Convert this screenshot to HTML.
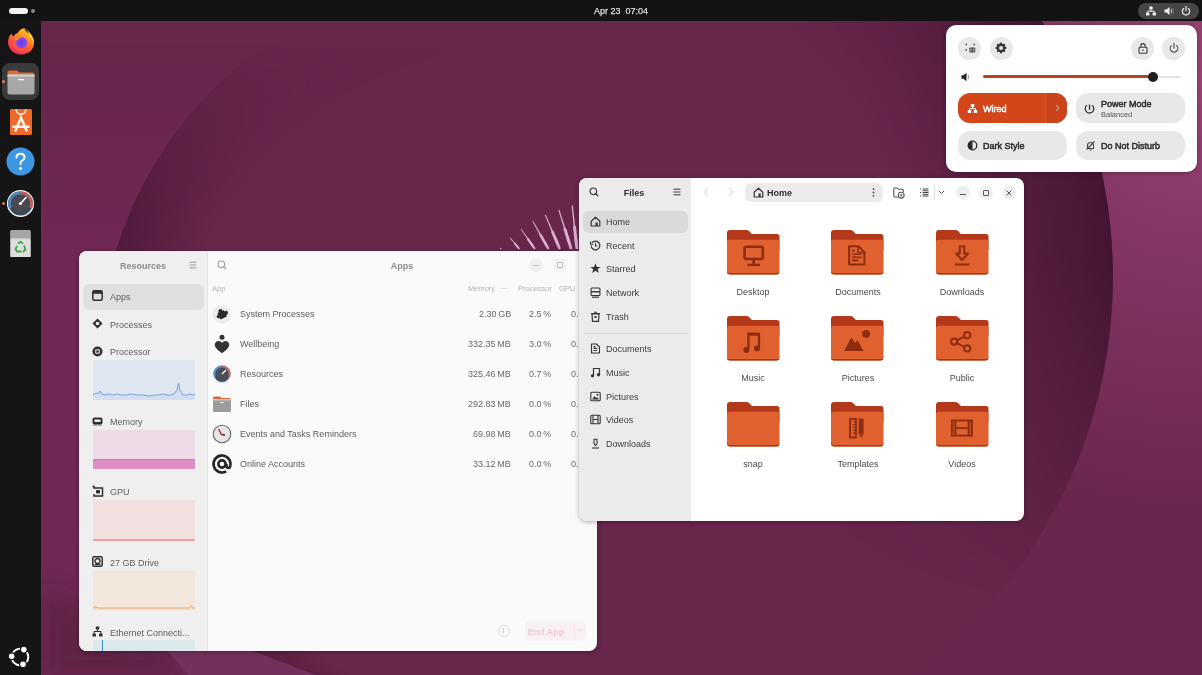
<!DOCTYPE html>
<html><head><meta charset="utf-8">
<style>
*{margin:0;padding:0;box-sizing:border-box}
html,body{width:1202px;height:675px;overflow:hidden;background:#68264b;font-family:"Liberation Sans",sans-serif}
.abs{position:absolute}
#wall{position:absolute;left:0;top:0;width:1202px;height:675px}
#topbar{position:absolute;left:0;top:0;width:1202px;height:21px;background:#131313}
#dock{position:absolute;left:0;top:21px;width:41px;height:654px;background:#151515}
.win{position:absolute;border-radius:8px;overflow:hidden;box-shadow:0 1px 5px rgba(0,0,0,.3)}
.t{position:absolute;white-space:nowrap;line-height:12px;font-size:9px;will-change:transform}
.r{text-align:right}
.c{text-align:center}
svg.abs{overflow:visible}
</style></head>
<body>
<div id="root" style="position:absolute;left:0;top:0;width:1202px;height:675px;overflow:hidden"><svg id="wall" width="1202" height="675" viewBox="0 0 1202 675">
  <defs>
    <filter id="bl12" x="-30%" y="-30%" width="160%" height="160%"><feGaussianBlur stdDeviation="12"/></filter>
    <clipPath id="outL"><path d="M0 0H1202V675H0Z M483 -22A383 383 0 1 0 483 744A383 383 0 1 0 483 -22Z" clip-rule="evenodd"/></clipPath>
    <clipPath id="outR"><path d="M0 0H1202V675H0Z M617 -219A496 496 0 1 0 617 773A496 496 0 1 0 617 -219Z" clip-rule="evenodd"/></clipPath>
    <radialGradient id="shR" cx="617" cy="277" r="496" fx="450" fy="330" gradientUnits="userSpaceOnUse">
      <stop offset="0.7" stop-color="#3a102c" stop-opacity="0"/>
      <stop offset="0.95" stop-color="#3a102c" stop-opacity="0.6"/>
      <stop offset="1" stop-color="#3a102c" stop-opacity="0.78"/>
    </radialGradient>
    <radialGradient id="fadeR" cx="1080" cy="130" r="470" gradientUnits="userSpaceOnUse">
      <stop offset="0.3" stop-color="#fff" stop-opacity="1"/><stop offset="1" stop-color="#fff" stop-opacity="0"/>
    </radialGradient>
    <mask id="mR"><rect width="1202" height="675" fill="url(#fadeR)"/></mask>
    <radialGradient id="shL" cx="483" cy="361" r="383" fx="640" fy="520" gradientUnits="userSpaceOnUse">
      <stop offset="0.86" stop-color="#3e1230" stop-opacity="0"/>
      <stop offset="0.99" stop-color="#3e1230" stop-opacity="0.5"/>
      <stop offset="1" stop-color="#3e1230" stop-opacity="0.55"/>
    </radialGradient>
    <linearGradient id="fadeL" x1="0" y1="45" x2="0" y2="230" gradientUnits="userSpaceOnUse">
      <stop offset="0" stop-color="#fff" stop-opacity="0"/><stop offset="1" stop-color="#fff" stop-opacity="1"/>
    </linearGradient>
    <mask id="mL"><rect x="0" y="0" width="460" height="675" fill="url(#fadeL)"/></mask>
    <radialGradient id="glowTR" cx="1202" cy="80" r="430" gradientUnits="userSpaceOnUse">
      <stop offset="0" stop-color="#9a4574"/>
      <stop offset="0.4" stop-color="#843564"/>
      <stop offset="1" stop-color="#6a274d"/>
    </radialGradient>
    <linearGradient id="rayg" x1="0" y1="0" x2="0" y2="1">
      <stop offset="0" stop-color="#c88ab8"/><stop offset="1" stop-color="#d9a6cc"/>
    </linearGradient>
  </defs>
  <rect width="1202" height="675" fill="#68264b"/>
  <g clip-path="url(#outL)" mask="url(#mL)"><rect x="0" y="0" width="420" height="675" fill="#6e2853"/></g>
  <circle cx="483" cy="361" r="383" fill="url(#shL)" mask="url(#mL)"/>
  <g clip-path="url(#outR)"><rect x="700" y="0" width="502" height="675" fill="url(#glowTR)"/></g>
  <circle cx="617" cy="277" r="496" fill="url(#shR)" mask="url(#mR)"/>
  <path d="M41 590L175 651L190 675H41Z" fill="#5c2142" filter="url(#bl12)" opacity="0.8"/>
  <path d="M168 651L253 651L316 675L188 675Z" fill="#74305c"/>
  <g fill="#dab0d0">
<path d="M509.7 237.9L513.9 243.1L514.0 243.9L516.8 247.4L518.8 249.5L520.0 248.5L518.3 246.1L515.4 242.8L514.6 242.5L510.3 237.5Z"/>
<path d="M520.6 229.1L526.8 238.3L527.0 239.6L531.1 245.7L534.1 249.5L535.7 248.5L533.1 244.3L528.8 238.3L527.6 237.6L521.2 228.7Z"/>
<path d="M532.4 221.3L539.3 234.0L539.5 235.7L544.1 244.1L547.4 249.5L549.4 248.5L546.5 242.7L541.7 234.4L540.4 233.3L533.2 220.9Z"/>
<path d="M544.8 215.1L551.2 230.5L551.3 232.5L555.5 242.8L558.7 249.5L560.9 248.5L558.3 241.6L553.8 231.4L552.4 230.0L545.8 214.7Z"/>
<path d="M558.3 209.9L563.7 227.6L563.6 229.8L567.2 241.6L570.0 249.4L572.4 248.6L570.2 240.7L566.4 228.9L565.1 227.2L559.3 209.5Z"/>
<path d="M571.6 205.6L573.6 225.2L573.1 227.4L574.4 240.5L575.6 249.1L578.2 248.9L577.6 240.1L576.0 227.1L575.0 225.0L572.8 205.4Z"/>
<circle cx="500.7" cy="248.5" r="0.8"/></g>
</svg>
<div id="topbar">
  <div class="abs" style="left:9px;top:8px;width:19px;height:6px;border-radius:3px;background:#f2f2f2"></div>
  <div class="abs" style="left:31px;top:9px;width:4px;height:4px;border-radius:2px;background:#8a8a8a"></div>
  <div class="t" style="left:594px;top:5px;font-size:9px;font-weight:normal;color:#dedede;line-height:12px;-webkit-text-stroke:0.25px #dedede">Apr 23&nbsp; 07:04</div>
  <div class="abs" style="left:1138px;top:3px;width:61px;height:16px;border-radius:8px;background:#464646"></div>
  <svg class="abs" style="left:1145px;top:5px" width="12" height="12" viewBox="0 0 12 12">
    <rect x="4.3" y="1.5" width="3.4" height="3" rx=".6" fill="#eee"/>
    <rect x="1" y="7.5" width="3.4" height="3" rx=".6" fill="#eee"/>
    <rect x="7.6" y="7.5" width="3.4" height="3" rx=".6" fill="#eee"/>
    <path d="M6 4.5V6.2M2.7 7.5V6.2H9.3V7.5" stroke="#eee" stroke-width="1" fill="none"/>
  </svg>
  <svg class="abs" style="left:1163px;top:5px" width="12" height="12" viewBox="0 0 12 12">
    <path d="M1.5 4.5H3.5L6.5 2V10L3.5 7.5H1.5Z" fill="#eee"/>
    <path d="M8 4Q9.3 6 8 8" stroke="#bbb" stroke-width="1.3" fill="none"/>
    <path d="M9.6 3Q11.4 6 9.6 9" stroke="#777" stroke-width="1" fill="none"/>
  </svg>
  <svg class="abs" style="left:1180px;top:5px" width="12" height="12" viewBox="0 0 12 12">
    <path d="M3.6 3.6A3.6 3.6 0 1 0 8.4 3.6" stroke="#ddd" stroke-width="1.3" fill="none" stroke-linecap="round"/>
    <path d="M6 1.5V5.6" stroke="#ddd" stroke-width="1.3" stroke-linecap="round"/>
  </svg>
</div>
<div id="dock">
  <!-- firefox -->
  <svg class="abs" style="left:7px;top:6px" width="28" height="28" viewBox="0 0 28 28">
    <defs>
      <linearGradient id="ffo" x1="0.8" y1="0" x2="0.2" y2="1">
        <stop offset="0" stop-color="#ffd43a"/><stop offset="0.35" stop-color="#ff8f1f"/><stop offset="0.75" stop-color="#ff3d4f"/><stop offset="1" stop-color="#f0226a"/>
      </linearGradient>
      <radialGradient id="ffi" cx="0.45" cy="0.55" r="0.6">
        <stop offset="0" stop-color="#6a3ae8"/><stop offset="1" stop-color="#8b4ff0"/>
      </radialGradient>
    </defs>
    <path d="M14 27.5C7 27.5 1 22 1 15C1 11.5 2.5 8.5 4.5 6.5C5 8 5.5 9 6.5 9.5C7.5 7.5 9 6.5 10.5 6.3C12 3.5 14.5 1.5 17.5 1C17.5 3 19 4.5 21 6C25 8.5 27 12 27 16C27 22.5 21.5 27.5 14 27.5Z" fill="url(#ffo)"/>
    <path d="M17.5 1C19.5 2.5 23 5 25 8.5C26.5 11 27 13.5 27 16C26 13 24 11 22 10C23 8 21 4.5 17.5 1Z" fill="#ffe04a" opacity="0.8"/>
    <circle cx="14.5" cy="15.5" r="5.6" fill="url(#ffi)"/>
    <path d="M7 12.5C8.5 10.3 11.5 9.5 14 10.3C12 11 11 12 10.8 13.2C9.8 13.5 8.5 13.3 7 12.5Z" fill="#ff9a1c"/>
    <path d="M3 15C4 21 9 24.5 14 24.5C19 24.5 23 21 24 17C22.5 20.5 19 22 15.5 21.7C11 21.3 8.5 18.5 8 15.5C6.5 16 4.5 15.8 3 15Z" fill="#ff5a36" opacity="0.7"/>
  </svg>
  <!-- files (active) -->
  <div class="abs" style="left:2px;top:42px;width:37px;height:37px;border-radius:8px;background:#3a3a3a"></div>
  <div class="abs" style="left:2px;top:59px;width:3px;height:3px;border-radius:2px;background:#e0774a"></div>
  <svg class="abs" style="left:7px;top:48px" width="28" height="26" viewBox="0 0 28 26">
    <path d="M0.5 3.5Q0.5 1.5 2.5 1.5H10L12 3.5H25.5Q27.5 3.5 27.5 5.5V8H0.5Z" fill="#e06a34"/>
    <rect x="0.5" y="5.5" width="27" height="20" rx="2" fill="#a8a8a8"/>
    <rect x="0.5" y="5.5" width="27" height="2" fill="#d0d0d0"/>
    <rect x="11" y="10" width="6" height="1.3" fill="#f4f4f4"/>
  </svg>
  <!-- app center -->
  <svg class="abs" style="left:9px;top:87px" width="24" height="28" viewBox="0 0 24 28">
    <path d="M2.5 1H21.5Q23 1 23 2.5V25.5Q23 27 21.5 27H2.5Q1 27 1 25.5V2.5Q1 1 2.5 1Z" fill="#ee6a2a"/>
    <path d="M7.3 1.5A4.7 4.7 0 0 0 16.7 1.5" stroke="#ffe6d6" stroke-width="1.7" fill="none"/>
    <path d="M6.5 22.5L12 9.8L17.5 22.5M4.5 18.8H19.5" stroke="#fff4ec" stroke-width="2.6" fill="none" stroke-linecap="round"/>
  </svg>
  <!-- help -->
  <svg class="abs" style="left:6px;top:126px" width="29" height="29" viewBox="0 0 29 29">
    <circle cx="14.5" cy="14.5" r="14" fill="#3f96e0"/>
    <path d="M10.5 10.5Q10.5 6.8 14.5 6.8Q18.5 6.8 18.5 10.3Q18.5 12.6 15.8 13.8Q14.5 14.5 14.5 17" stroke="#fff" stroke-width="2" fill="none" stroke-linecap="round"/>
    <circle cx="14.5" cy="21.5" r="1.5" fill="#fff"/>
  </svg>
  <!-- resources -->
  <div class="abs" style="left:2px;top:181px;width:3px;height:3px;border-radius:2px;background:#e0774a"></div>
  <svg class="abs" style="left:6px;top:168px" width="29" height="29" viewBox="0 0 29 29">
    <circle cx="14.5" cy="14.5" r="13.6" fill="#f2f2f2"/>
    <circle cx="14.5" cy="14.5" r="12" fill="#3b4a5a"/>
    <path d="M4.5 19A10.5 10.5 0 0 1 14.5 4" stroke="#4f86b8" stroke-width="3" fill="none"/>
    <path d="M14.5 4A10.5 10.5 0 0 1 24.5 19" stroke="#b86060" stroke-width="3" fill="none"/>
    <circle cx="14.5" cy="14.5" r="8" fill="#4a4a4e"/>
    <path d="M14.5 14.5L20 8.5" stroke="#fff" stroke-width="1.6" stroke-linecap="round"/>
    <circle cx="14.5" cy="14.5" r="1.6" fill="#fff"/>
  </svg>
  <!-- trash -->
  <svg class="abs" style="left:9px;top:208px" width="23" height="29" viewBox="0 0 23 29">
    <path d="M1.5 2.5Q1.5 1 3 1H20Q21.5 1 21.5 2.5V28H1.5Z" fill="#e2e2e2"/>
    <path d="M1.5 2.5Q1.5 1 3 1H20Q21.5 1 21.5 2.5V9.5H1.5Z" fill="#a6a6a6"/>
    <rect x="1.5" y="9.5" width="20" height="1" fill="#c8c8c8"/>
    <path d="M1.5 10.5H21.5V26.5Q21.5 28 20 28H3Q1.5 28 1.5 26.5Z" fill="#dedede"/>
    <g stroke="#3aa845" stroke-width="1.8" fill="none" stroke-linecap="round">
      <path d="M9.5 14.2L11.5 12.8L13.5 14.2"/>
      <path d="M15.2 17L16.5 20.5L14.5 22.5"/>
      <path d="M11.8 22.5H8L6.5 20L7.8 17.5"/>
    </g>
  </svg>
  <!-- ubuntu logo -->
  <svg class="abs" style="left:8px;top:624px" width="24" height="24" viewBox="0 0 24 24">
    <circle cx="12" cy="12" r="8.3" stroke="#fff" stroke-width="2" fill="none"/>
    <circle cx="15.8" cy="4.6" r="3.4" fill="#fff" stroke="#151515" stroke-width="1.2"/>
    <circle cx="3.7" cy="11.3" r="3.4" fill="#fff" stroke="#151515" stroke-width="1.2"/>
    <circle cx="15" cy="19.3" r="3.4" fill="#fff" stroke="#151515" stroke-width="1.2"/>
  </svg>
</div>

<div class="win" style="left:79px;top:251px;width:518px;height:400px;background:#fafafa">
<div class="abs" style="left:0;top:0;width:129px;height:400px;background:#efefef;border-right:1px solid #e4e4e4"></div>
<div class="t c" style="left:-36px;width:200px;top:8.5px;font-size:9px;color:#8c8c8c;font-weight:bold;">Resources</div>
<svg class="abs" style="left:110px;top:10px" width="8" height="8" viewBox="0 0 8 8"><path d="M0.5 1.2H7.5M0.5 4H7.5M0.5 6.8H7.5" stroke="#9a9a9a" stroke-width="1"/></svg>
<div class="abs" style="left:4px;top:33px;width:121px;height:26px;border-radius:6px;background:#dfdfdf"></div>
<svg class="abs" style="left:13px;top:39px" width="11" height="11" viewBox="0 0 11 11"><rect x="0.8" y="0.8" width="9.4" height="9.4" rx="1.5" stroke="#2f2f2f" stroke-width="1.5" fill="none"/><rect x="0.8" y="0.8" width="9.4" height="3" fill="#2f2f2f"/></svg>
<div class="t" style="left:31px;top:39.5px;font-size:9px;color:#5e5e5e;font-weight:normal;">Apps</div>
<svg class="abs" style="left:13px;top:67px" width="11" height="11" viewBox="0 0 11 11"><path d="M5.5 0.5L10.5 5.5L5.5 10.5L0.5 5.5Z" fill="#2f2f2f"/><circle cx="5.5" cy="5.5" r="1.8" fill="#efefef"/></svg>
<div class="t" style="left:31px;top:67.5px;font-size:9px;color:#5e5e5e;font-weight:normal;">Processes</div>
<svg class="abs" style="left:13px;top:94.7px" width="11" height="11" viewBox="0 0 11 11"><circle cx="5.5" cy="5.5" r="5" fill="#2f2f2f"/><rect x="3.3" y="3.3" width="4.4" height="4.4" fill="#efefef"/><rect x="4.3" y="4.3" width="2.4" height="2.4" fill="#2f2f2f"/></svg>
<div class="t" style="left:31px;top:95.2px;font-size:9px;color:#5e5e5e;font-weight:normal;">Processor</div>
<svg class="abs" style="left:13px;top:164.6px" width="11" height="11" viewBox="0 0 11 11"><rect x="0.5" y="1.5" width="10" height="7" rx="2" fill="#2f2f2f"/><rect x="2.5" y="3.5" width="6" height="2.5" fill="#efefef"/><path d="M2 8.5V10M4 8.5V10M7 8.5V10M9 8.5V10" stroke="#2f2f2f" stroke-width="0.8"/></svg>
<div class="t" style="left:31px;top:165.1px;font-size:9px;color:#5e5e5e;font-weight:normal;">Memory</div>
<svg class="abs" style="left:13px;top:234.9px" width="11" height="11" viewBox="0 0 11 11"><path d="M0.5 0.5H2V2H10.5V10H2V8" stroke="#2f2f2f" stroke-width="1.5" fill="none"/><rect x="4" y="4" width="4" height="3.5" rx="1" fill="#2f2f2f"/></svg>
<div class="t" style="left:31px;top:235.4px;font-size:9px;color:#5e5e5e;font-weight:normal;">GPU</div>
<svg class="abs" style="left:13px;top:305px" width="11" height="11" viewBox="0 0 11 11"><rect x="0.8" y="0.8" width="9.4" height="9.4" rx="1.5" stroke="#2f2f2f" stroke-width="1.5" fill="none"/><circle cx="5.5" cy="5" r="2.5" stroke="#2f2f2f" stroke-width="1.3" fill="none"/><rect x="2.5" y="8" width="6" height="1" fill="#2f2f2f"/></svg>
<div class="t" style="left:31px;top:305.5px;font-size:9px;color:#5e5e5e;font-weight:normal;">27 GB Drive</div>
<svg class="abs" style="left:13px;top:375px" width="11" height="11" viewBox="0 0 11 11"><rect x="3.8" y="0.5" width="3.4" height="3" fill="#2f2f2f"/><rect x="0.5" y="7.5" width="3.4" height="3" fill="#2f2f2f"/><rect x="7.1" y="7.5" width="3.4" height="3" fill="#2f2f2f"/><path d="M5.5 3.5V5.5M2.2 7.5V5.5H8.8V7.5" stroke="#2f2f2f" stroke-width="1.1" fill="none"/></svg>
<div class="t" style="left:31px;top:375.5px;font-size:9px;color:#5e5e5e;font-weight:normal;">Ethernet Connecti...</div>
<div class="abs" style="left:14px;top:109px;width:102px;height:40px;background:#dfe6ef"><svg class="abs" style="left:0;top:0" width="102" height="40" viewBox="0 0 102 40"><path d="M0 35L3 33L5 34L7 31L9 34L12 35L16 34L20 35L24 34L28 35L33 35L38 34L44 35L50 35L56 36L62 35L66 35L70 34L74 35L78 35L81 34L84 30L85.5 23L87 30L90 35L94 35L97 34L100 35L102 34V40H0Z" fill="#d3def0"/><path d="M0 35L3 33L5 34L7 31L9 34L12 35L16 34L20 35L24 34L28 35L33 35L38 34L44 35L50 35L56 36L62 35L66 35L70 34L74 35L78 35L81 34L84 30L85.5 23L87 30L90 35L94 35L97 34L100 35L102 34" fill="none" stroke="#6b9ddc" stroke-width="0.9"/></svg></div>
<div class="abs" style="left:14px;top:179px;width:102px;height:39px;background:#eddbe8"><div class="abs" style="left:0;top:29px;width:102px;height:10px;background:#e08fc6;border-top:1px solid #d873b7"></div></div>
<div class="abs" style="left:14px;top:249px;width:102px;height:41px;background:#f2dfe0"><div class="abs" style="left:0;top:39px;width:102px;height:2px;background:#e8a0a0"></div></div>
<div class="abs" style="left:14px;top:320px;width:102px;height:39px;background:#f3e6da"><svg class="abs" style="left:0;top:0" width="102" height="39" viewBox="0 0 102 39"><path d="M0 37L2 35L4 37L96 37L98 35L100 37L102 37V39H0Z" fill="#f1dcc6"/><path d="M0 37L2 35L4 37L96 37L98 35L100 37L102 37" fill="none" stroke="#eba670" stroke-width="0.9"/></svg></div>
<div class="abs" style="left:14px;top:389px;width:102px;height:20px;background:#dce9ec"><div class="abs" style="left:9px;top:0;width:1.2px;height:20px;background:#3a90b8"></div></div>
<svg class="abs" style="left:138px;top:9px" width="10" height="10" viewBox="0 0 10 10"><circle cx="4.3" cy="4.3" r="3.3" stroke="#9a9a9a" stroke-width="1.1" fill="none"/><path d="M6.7 6.7L9.2 9.2" stroke="#9a9a9a" stroke-width="1.2"/></svg>
<div class="t c" style="left:223px;width:200px;top:8.5px;font-size:9px;color:#8c8c8c;font-weight:bold;">Apps</div>
<div class="abs" style="left:450px;top:7px;width:14px;height:14px;border-radius:7px;background:#f0f0f0"></div>
<div class="abs" style="left:473.6px;top:7px;width:14px;height:14px;border-radius:7px;background:#f0f0f0"></div>
<div class="abs" style="left:454px;top:14px;width:6px;height:1px;background:#c0c0c0"></div>
<div class="abs" style="left:477.6px;top:11px;width:6px;height:6px;border:1px solid #c0c0c0;border-radius:1px"></div>
<div class="t" style="left:133px;top:32.0px;font-size:7.5px;color:#b4b4b4;font-weight:normal;">App</div>
<div class="t r" style="right:101.5px;top:32.0px;font-size:7.5px;color:#b4b4b4;font-weight:normal;">Memory</div>
<div class="abs" style="left:422px;top:37px;width:6px;height:1px;background:#e0e0e0"></div>
<div class="t r" style="right:45.5px;top:32.0px;font-size:7.5px;color:#b4b4b4;font-weight:normal;">Processor</div>
<div class="t" style="left:480px;top:32.0px;font-size:7.5px;color:#b4b4b4;font-weight:normal;">GPU</div>
<svg class="abs" style="left:133px;top:52.6px" width="20" height="20" viewBox="0 0 20 20"><circle cx="10" cy="10" r="9.5" fill="#ececec"/><g transform="rotate(-25 10 10.5)" fill="#2a2a2a"><rect x="6.3" y="7.3" width="7.4" height="7" rx="0.8"/><circle cx="10" cy="6.6" r="2"/><circle cx="14.3" cy="10.8" r="2"/><circle cx="5.7" cy="10.8" r="1.6"/></g></svg>
<div class="t" style="left:161px;top:57.1px;font-size:9px;color:#5c5c5c;font-weight:normal;">System Processes</div>
<div class="t r" style="right:86px;top:57.1px;font-size:9px;color:#6a6a6a;font-weight:normal;">2.30&#8201;GB</div>
<div class="t r" style="right:46px;top:57.1px;font-size:9px;color:#6a6a6a;font-weight:normal;">2.5&#8201;%</div>
<div class="t" style="left:492px;top:57.1px;font-size:9px;color:#6a6a6a;font-weight:normal;">0.0&#8201;%</div>
<svg class="abs" style="left:133px;top:82.6px" width="20" height="20" viewBox="0 0 20 20"><circle cx="10" cy="3.3" r="2.5" fill="#333"/><path d="M10 19.2C6.5 16.5 2.8 14 2.8 10.8C2.8 8.5 4.6 7 6.5 7C8 7 9.2 7.8 10 9C10.8 7.8 12 7 13.5 7C15.4 7 17.2 8.5 17.2 10.8C17.2 14 13.5 16.5 10 19.2Z" fill="#333"/></svg>
<div class="t" style="left:161px;top:87.1px;font-size:9px;color:#5c5c5c;font-weight:normal;">Wellbeing</div>
<div class="t r" style="right:86px;top:87.1px;font-size:9px;color:#6a6a6a;font-weight:normal;">332.35&#8201;MB</div>
<div class="t r" style="right:46px;top:87.1px;font-size:9px;color:#6a6a6a;font-weight:normal;">3.0&#8201;%</div>
<div class="t" style="left:492px;top:87.1px;font-size:9px;color:#6a6a6a;font-weight:normal;">0.0&#8201;%</div>
<svg class="abs" style="left:133px;top:112.6px" width="20" height="20" viewBox="0 0 20 20"><circle cx="10" cy="10" r="9.3" fill="#dde3ea"/><circle cx="10" cy="10" r="8" fill="#3b4f66"/><path d="M3 13A7.5 7.5 0 0 1 10 2.5" stroke="#5a8fc0" stroke-width="2" fill="none"/><path d="M10 2.5A7.5 7.5 0 0 1 17 13" stroke="#c06868" stroke-width="2" fill="none"/><circle cx="10" cy="10" r="5.5" fill="#4d4d52"/><path d="M10 10L14 6" stroke="#fff" stroke-width="1.2"/></svg>
<div class="t" style="left:161px;top:117.1px;font-size:9px;color:#5c5c5c;font-weight:normal;">Resources</div>
<div class="t r" style="right:86px;top:117.1px;font-size:9px;color:#6a6a6a;font-weight:normal;">325.46&#8201;MB</div>
<div class="t r" style="right:46px;top:117.1px;font-size:9px;color:#6a6a6a;font-weight:normal;">0.7&#8201;%</div>
<div class="t" style="left:492px;top:117.1px;font-size:9px;color:#6a6a6a;font-weight:normal;">0.0&#8201;%</div>
<svg class="abs" style="left:133px;top:142.6px" width="20" height="20" viewBox="0 0 20 20"><path d="M1 4Q1 2.5 2.5 2.5H8L9.5 4H17.5Q19 4 19 5.5V7H1Z" fill="#d8693a"/><rect x="1" y="5" width="18" height="13" rx="1.5" fill="#9c9c9c"/><rect x="1" y="5" width="18" height="1.5" fill="#c8c8c8"/><rect x="8" y="8" width="4" height="1" fill="#e8e8e8"/></svg>
<div class="t" style="left:161px;top:147.1px;font-size:9px;color:#5c5c5c;font-weight:normal;">Files</div>
<div class="t r" style="right:86px;top:147.1px;font-size:9px;color:#6a6a6a;font-weight:normal;">292.83&#8201;MB</div>
<div class="t r" style="right:46px;top:147.1px;font-size:9px;color:#6a6a6a;font-weight:normal;">0.0&#8201;%</div>
<div class="t" style="left:492px;top:147.1px;font-size:9px;color:#6a6a6a;font-weight:normal;">0.0&#8201;%</div>
<svg class="abs" style="left:133px;top:172.6px" width="20" height="20" viewBox="0 0 20 20"><circle cx="10" cy="10" r="9.3" fill="#6a6a6a"/><circle cx="10" cy="10" r="8.2" fill="#e6e6e6"/><path d="M6.5 5L9.5 10.5L13 11" stroke="#c82828" stroke-width="1.5" fill="none"/><path d="M9.5 10.5L13 11" stroke="#333" stroke-width="1.2"/></svg>
<div class="t" style="left:161px;top:177.1px;font-size:9px;color:#5c5c5c;font-weight:normal;">Events and Tasks Reminders</div>
<div class="t r" style="right:86px;top:177.1px;font-size:9px;color:#6a6a6a;font-weight:normal;">69.98&#8201;MB</div>
<div class="t r" style="right:46px;top:177.1px;font-size:9px;color:#6a6a6a;font-weight:normal;">0.0&#8201;%</div>
<div class="t" style="left:492px;top:177.1px;font-size:9px;color:#6a6a6a;font-weight:normal;">0.0&#8201;%</div>
<svg class="abs" style="left:133px;top:202.6px" width="20" height="20" viewBox="0 0 20 20"><path d="M14.5 10V11.5Q14.5 14 16.5 14Q18.5 14 18.5 10A8.5 8.5 0 1 0 14.2 17.4" stroke="#262626" stroke-width="2.6" fill="none"/><circle cx="10" cy="10" r="3.6" stroke="#262626" stroke-width="2.6" fill="none"/></svg>
<div class="t" style="left:161px;top:207.1px;font-size:9px;color:#5c5c5c;font-weight:normal;">Online Accounts</div>
<div class="t r" style="right:86px;top:207.1px;font-size:9px;color:#6a6a6a;font-weight:normal;">33.12&#8201;MB</div>
<div class="t r" style="right:46px;top:207.1px;font-size:9px;color:#6a6a6a;font-weight:normal;">0.0&#8201;%</div>
<div class="t" style="left:492px;top:207.1px;font-size:9px;color:#6a6a6a;font-weight:normal;">0.0&#8201;%</div>
<div class="abs" style="left:418.5px;top:374px;width:12px;height:12px;border-radius:6px;border:1px solid #dcdcdc"></div>
<div class="abs" style="left:424px;top:377px;width:1px;height:6px;background:#d4d4d4"></div>
<div class="abs" style="left:445.5px;top:369.5px;width:61px;height:20px;border-radius:5px;background:#f7f1f2"></div>
<div class="t c" style="left:367px;width:200px;top:374.5px;font-size:9px;color:#f0ccd6;font-weight:bold;">End App</div>
<div class="abs" style="left:495px;top:372px;width:1px;height:15px;background:#f8e6ea"></div>
<svg class="abs" style="left:498px;top:377px" width="6" height="5" viewBox="0 0 6 5"><path d="M1 1.5L3 3.5L5 1.5" stroke="#ecc4cf" stroke-width="1" fill="none"/></svg>
</div>
<div class="win" style="left:579px;top:178px;width:445px;height:343px;background:#ffffff">
<div class="abs" style="left:0;top:0;width:112px;height:343px;background:#ebebeb"></div>
<svg class="abs" style="left:9.5px;top:9px" width="10" height="10" viewBox="0 0 10 10"><circle cx="4.3" cy="4.3" r="3.3" stroke="#3a3a3a" stroke-width="1.2" fill="none"/><path d="M6.7 6.7L9.2 9.2" stroke="#3a3a3a" stroke-width="1.3"/></svg>
<div class="t c" style="left:-44.6px;width:200px;top:8.5px;font-size:9px;color:#2e2e2e;font-weight:bold;">Files</div>
<svg class="abs" style="left:94px;top:10px" width="8" height="8" viewBox="0 0 8 8"><path d="M0.5 1.2H7.5M0.5 4H7.5M0.5 6.8H7.5" stroke="#3a3a3a" stroke-width="1"/></svg>
<div class="abs" style="left:4px;top:33px;width:104.5px;height:21.5px;border-radius:6px;background:#dadada"></div>
<svg class="abs" style="left:11.3px;top:38.0px" width="11" height="11" viewBox="0 0 11 11"><path d="M1.2 5.2L5.5 1.2L9.8 5.2V10H1.2Z" stroke="#353535" stroke-width="1.2" fill="none" stroke-linejoin="round"/><rect x="5.5" y="6.5" width="2.2" height="3.5" fill="#353535"/></svg>
<div class="t" style="left:27.4px;top:38.0px;font-size:9px;color:#3c3c3c;font-weight:normal;">Home</div>
<svg class="abs" style="left:11.3px;top:61.7px" width="11" height="11" viewBox="0 0 11 11"><path d="M2 3A4.3 4.3 0 1 1 1.2 5.5" stroke="#353535" stroke-width="1.2" fill="none"/><path d="M0.5 1.5V4.2H3.2" stroke="#353535" stroke-width="1.1" fill="none"/><path d="M5.5 3V6H7.5" stroke="#353535" stroke-width="1.1" fill="none"/></svg>
<div class="t" style="left:27.4px;top:61.7px;font-size:9px;color:#3c3c3c;font-weight:normal;">Recent</div>
<svg class="abs" style="left:11.3px;top:85.4px" width="11" height="11" viewBox="0 0 11 11"><path d="M5.5 0.6L7 4H10.6L7.7 6.3L8.8 9.9L5.5 7.7L2.2 9.9L3.3 6.3L0.4 4H4Z" fill="#353535"/></svg>
<div class="t" style="left:27.4px;top:85.4px;font-size:9px;color:#3c3c3c;font-weight:normal;">Starred</div>
<svg class="abs" style="left:11.3px;top:109.1px" width="11" height="11" viewBox="0 0 11 11"><rect x="1" y="1" width="9" height="3.8" rx="1" stroke="#353535" stroke-width="1.1" fill="none"/><rect x="1" y="4.8" width="9" height="3.8" rx="1" stroke="#353535" stroke-width="1.1" fill="none"/><path d="M2 10.3H9" stroke="#353535" stroke-width="1"/></svg>
<div class="t" style="left:27.4px;top:109.1px;font-size:9px;color:#3c3c3c;font-weight:normal;">Network</div>
<svg class="abs" style="left:11.3px;top:132.8px" width="11" height="11" viewBox="0 0 11 11"><path d="M2 3H9L8.5 10.3H2.5Z" stroke="#353535" stroke-width="1.2" fill="none"/><path d="M1 2.5H10M4 1.2H7" stroke="#353535" stroke-width="1.1"/><rect x="4.5" y="5" width="2" height="2" fill="#353535"/></svg>
<div class="t" style="left:27.4px;top:132.8px;font-size:9px;color:#3c3c3c;font-weight:normal;">Trash</div>
<svg class="abs" style="left:11.3px;top:165.3px" width="11" height="11" viewBox="0 0 11 11"><path d="M1.5 1H6.5L9.5 4V10H1.5Z" stroke="#353535" stroke-width="1.1" fill="none" stroke-linejoin="round"/><path d="M3.5 5.5H7.5M3.5 7.5H7" stroke="#353535" stroke-width="1"/><rect x="3.5" y="3" width="2" height="1.5" fill="#353535"/></svg>
<div class="t" style="left:27.4px;top:165.3px;font-size:9px;color:#3c3c3c;font-weight:normal;">Documents</div>
<svg class="abs" style="left:11.3px;top:189.0px" width="11" height="11" viewBox="0 0 11 11"><path d="M3.5 8.5V1.5H9.5V7.5" stroke="#353535" stroke-width="1.2" fill="none"/><circle cx="2.5" cy="8.8" r="1.7" fill="#353535"/><circle cx="8.5" cy="7.8" r="1.7" fill="#353535"/></svg>
<div class="t" style="left:27.4px;top:189.0px;font-size:9px;color:#3c3c3c;font-weight:normal;">Music</div>
<svg class="abs" style="left:11.3px;top:212.7px" width="11" height="11" viewBox="0 0 11 11"><rect x="0.8" y="1.3" width="9.4" height="8.4" rx="1" stroke="#353535" stroke-width="1.1" fill="none"/><path d="M2 8.5L4.5 5L6 7L7 6L9 8.5Z" fill="#353535"/><circle cx="7.5" cy="3.8" r="1" fill="#353535"/></svg>
<div class="t" style="left:27.4px;top:212.7px;font-size:9px;color:#3c3c3c;font-weight:normal;">Pictures</div>
<svg class="abs" style="left:11.3px;top:236.4px" width="11" height="11" viewBox="0 0 11 11"><rect x="0.8" y="1.3" width="9.4" height="8.4" rx="1" stroke="#353535" stroke-width="1.1" fill="none"/><path d="M3 1.3V9.7M8 1.3V9.7M3 5.5H8" stroke="#353535" stroke-width="1.1"/></svg>
<div class="t" style="left:27.4px;top:236.4px;font-size:9px;color:#3c3c3c;font-weight:normal;">Videos</div>
<svg class="abs" style="left:11.3px;top:260.1px" width="11" height="11" viewBox="0 0 11 11"><path d="M4 1.2H7V5.5L5.5 7.5L4 5.5Z" stroke="#353535" stroke-width="1.1" fill="none"/><path d="M2 10H9" stroke="#353535" stroke-width="1.1"/></svg>
<div class="t" style="left:27.4px;top:260.1px;font-size:9px;color:#3c3c3c;font-weight:normal;">Downloads</div>
<div class="abs" style="left:5px;top:155px;width:104px;height:1px;background:#d6d6d6"></div>
<svg class="abs" style="left:124px;top:9px" width="6" height="10" viewBox="0 0 6 10"><path d="M4.5 1L1.5 5L4.5 9" stroke="#d4d4d4" stroke-width="1.1" fill="none"/></svg>
<svg class="abs" style="left:149px;top:9px" width="6" height="10" viewBox="0 0 6 10"><path d="M1.5 1L4.5 5L1.5 9" stroke="#d4d4d4" stroke-width="1.1" fill="none"/></svg>
<div class="abs" style="left:166.4px;top:4.7px;width:138px;height:19.6px;border-radius:6px;background:#ebebeb"></div>
<svg class="abs" style="left:173.5px;top:8.5px" width="11" height="11" viewBox="0 0 11 11"><path d="M1.2 5.2L5.5 1.2L9.8 5.2V10H1.2Z" stroke="#353535" stroke-width="1.2" fill="none" stroke-linejoin="round"/><rect x="5.5" y="6.5" width="2.2" height="3.5" fill="#353535"/></svg>
<div class="t" style="left:188.4px;top:8.5px;font-size:9px;color:#2e2e2e;font-weight:bold;">Home</div>
<svg class="abs" style="left:292.5px;top:9.5px" width="3" height="9" viewBox="0 0 3 9"><circle cx="1.5" cy="1.2" r="0.9" fill="#444"/><circle cx="1.5" cy="4.5" r="0.9" fill="#444"/><circle cx="1.5" cy="7.8" r="0.9" fill="#444"/></svg>
<svg class="abs" style="left:313.5px;top:8.5px" width="12" height="12" viewBox="0 0 12 12"><path d="M5 10H1.8Q0.8 10 0.8 9V2Q0.8 1 1.8 1H4.3L5.5 2.3H9.3Q10.3 2.3 10.3 3.3V5" stroke="#555" stroke-width="1.1" fill="none"/><circle cx="8.2" cy="8.2" r="2.9" stroke="#555" stroke-width="1.1" fill="none"/><path d="M8.2 6.9V9.5M6.9 8.2H9.5" stroke="#555" stroke-width="0.9"/></svg>
<svg class="abs" style="left:340px;top:9.5px" width="10" height="9" viewBox="0 0 10 9"><path d="M1 1H2M1 4.5H2M1 8H2M3.5 1H9.5M3.5 4.5H9.5M3.5 8H9.5M3.5 2.8H9.5M3.5 6.3H9.5" stroke="#444" stroke-width="1"/></svg>
<div class="abs" style="left:355px;top:6px;width:1px;height:16px;background:#dcdcdc"></div>
<svg class="abs" style="left:359px;top:12px" width="7" height="5" viewBox="0 0 7 5"><path d="M1 1L3.5 3.5L6 1" stroke="#555" stroke-width="1" fill="none"/></svg>
<div class="abs" style="left:377.0px;top:7.8px;width:13.6px;height:13.6px;border-radius:7px;background:#eeeeee"></div>
<div class="abs" style="left:400.0px;top:7.8px;width:13.6px;height:13.6px;border-radius:7px;background:#eeeeee"></div>
<div class="abs" style="left:423.59999999999997px;top:7.8px;width:13.6px;height:13.6px;border-radius:7px;background:#eeeeee"></div>
<div class="abs" style="left:381px;top:15.5px;width:5.5px;height:1.1px;background:#5a5a5a"></div>
<div class="abs" style="left:404px;top:11.8px;width:5.8px;height:5.8px;border:1px solid #5a5a5a;border-radius:1px"></div>
<svg class="abs" style="left:427.4px;top:11.6px" width="6" height="6" viewBox="0 0 6 6"><path d="M0.6 0.6L5.4 5.4M5.4 0.6L0.6 5.4" stroke="#5a5a5a" stroke-width="1"/></svg>
<svg class="abs" style="left:147.5px;top:51.5px" width="53" height="45" viewBox="0 0 53 45">
<path d="M0 3Q0 0 3 0H19.5Q21 0 22 1L25 4.1H50Q52.5 4.1 52.5 6.6V20H0Z" fill="#b3391a"/>
<path d="M0 12.5Q0 9.8 2.7 9.8H49.8Q52.5 9.8 52.5 12.5V41.5Q52.5 44.5 49.5 44.5H3Q0 44.5 0 41.5Z" fill="#e0612f"/>
<path d="M0 41V41.5Q0 44.5 3 44.5H49.5Q52.5 44.5 52.5 41.5V41Q52.5 43 49.5 43H3Q0 43 0 41Z" fill="#a63a18"/>
<rect x="17.6" y="16.7" width="18.2" height="12.3" rx="1.5" stroke="#8e2c10" stroke-width="2.6" fill="none"/><path d="M26.7 30V34" stroke="#8e2c10" stroke-width="2.6"/><path d="M20.5 34.9H32.9" stroke="#8e2c10" stroke-width="2.4"/></svg>
<div class="t c" style="left:73.75px;width:200px;top:107.5px;font-size:9px;color:#4a4a4a;font-weight:normal;">Desktop</div>
<svg class="abs" style="left:252.3px;top:51.5px" width="53" height="45" viewBox="0 0 53 45">
<path d="M0 3Q0 0 3 0H19.5Q21 0 22 1L25 4.1H50Q52.5 4.1 52.5 6.6V20H0Z" fill="#b3391a"/>
<path d="M0 12.5Q0 9.8 2.7 9.8H49.8Q52.5 9.8 52.5 12.5V41.5Q52.5 44.5 49.5 44.5H3Q0 44.5 0 41.5Z" fill="#e0612f"/>
<path d="M0 41V41.5Q0 44.5 3 44.5H49.5Q52.5 44.5 52.5 41.5V41Q52.5 43 49.5 43H3Q0 43 0 41Z" fill="#a63a18"/>
<path d="M18.1 16.2H27.5L33.4 22.1V34.4H18.1Z" stroke="#8e2c10" stroke-width="2" fill="none" stroke-linejoin="round"/><path d="M27 16.2V22.5H33.4" stroke="#8e2c10" stroke-width="1.6" fill="none"/><path d="M21 24.2H30.5M21 27.3H30.5M21 30.4H27.5" stroke="#8e2c10" stroke-width="1.6"/><path d="M21 20.5H24" stroke="#8e2c10" stroke-width="1.6"/></svg>
<div class="t c" style="left:178.55px;width:200px;top:107.5px;font-size:9px;color:#4a4a4a;font-weight:normal;">Documents</div>
<svg class="abs" style="left:356.8px;top:51.5px" width="53" height="45" viewBox="0 0 53 45">
<path d="M0 3Q0 0 3 0H19.5Q21 0 22 1L25 4.1H50Q52.5 4.1 52.5 6.6V20H0Z" fill="#b3391a"/>
<path d="M0 12.5Q0 9.8 2.7 9.8H49.8Q52.5 9.8 52.5 12.5V41.5Q52.5 44.5 49.5 44.5H3Q0 44.5 0 41.5Z" fill="#e0612f"/>
<path d="M0 41V41.5Q0 44.5 3 44.5H49.5Q52.5 44.5 52.5 41.5V41Q52.5 43 49.5 43H3Q0 43 0 41Z" fill="#a63a18"/>
<path d="M23.8 16.2H28.3V23.5H32L26.05 30L20.1 23.5H23.8Z" stroke="#8e2c10" stroke-width="2" fill="none" stroke-linejoin="round"/><path d="M19 34.4H33.2" stroke="#8e2c10" stroke-width="2"/></svg>
<div class="t c" style="left:283.05px;width:200px;top:107.5px;font-size:9px;color:#4a4a4a;font-weight:normal;">Downloads</div>
<svg class="abs" style="left:147.5px;top:137.7px" width="53" height="45" viewBox="0 0 53 45">
<path d="M0 3Q0 0 3 0H19.5Q21 0 22 1L25 4.1H50Q52.5 4.1 52.5 6.6V20H0Z" fill="#b3391a"/>
<path d="M0 12.5Q0 9.8 2.7 9.8H49.8Q52.5 9.8 52.5 12.5V41.5Q52.5 44.5 49.5 44.5H3Q0 44.5 0 41.5Z" fill="#e0612f"/>
<path d="M0 41V41.5Q0 44.5 3 44.5H49.5Q52.5 44.5 52.5 41.5V41Q52.5 43 49.5 43H3Q0 43 0 41Z" fill="#a63a18"/>
<path d="M21.4 33.5V18H32V31.8" stroke="#8e2c10" stroke-width="2.3" fill="none"/><path d="M21.4 18.2H32" stroke="#8e2c10" stroke-width="3"/><circle cx="19.4" cy="34" r="3" fill="#8e2c10"/><circle cx="30" cy="32.4" r="3" fill="#8e2c10"/></svg>
<div class="t c" style="left:73.75px;width:200px;top:193.7px;font-size:9px;color:#4a4a4a;font-weight:normal;">Music</div>
<svg class="abs" style="left:252.3px;top:137.7px" width="53" height="45" viewBox="0 0 53 45">
<path d="M0 3Q0 0 3 0H19.5Q21 0 22 1L25 4.1H50Q52.5 4.1 52.5 6.6V20H0Z" fill="#b3391a"/>
<path d="M0 12.5Q0 9.8 2.7 9.8H49.8Q52.5 9.8 52.5 12.5V41.5Q52.5 44.5 49.5 44.5H3Q0 44.5 0 41.5Z" fill="#e0612f"/>
<path d="M0 41V41.5Q0 44.5 3 44.5H49.5Q52.5 44.5 52.5 41.5V41Q52.5 43 49.5 43H3Q0 43 0 41Z" fill="#a63a18"/>
<path d="M13.1 35L20.4 21.6L24 27L26.5 24L32.6 35Z" fill="#8e2c10"/><circle cx="35.1" cy="17.9" r="3.9" fill="#8e2c10"/></svg>
<div class="t c" style="left:178.55px;width:200px;top:193.7px;font-size:9px;color:#4a4a4a;font-weight:normal;">Pictures</div>
<svg class="abs" style="left:356.8px;top:137.7px" width="53" height="45" viewBox="0 0 53 45">
<path d="M0 3Q0 0 3 0H19.5Q21 0 22 1L25 4.1H50Q52.5 4.1 52.5 6.6V20H0Z" fill="#b3391a"/>
<path d="M0 12.5Q0 9.8 2.7 9.8H49.8Q52.5 9.8 52.5 12.5V41.5Q52.5 44.5 49.5 44.5H3Q0 44.5 0 41.5Z" fill="#e0612f"/>
<path d="M0 41V41.5Q0 44.5 3 44.5H49.5Q52.5 44.5 52.5 41.5V41Q52.5 43 49.5 43H3Q0 43 0 41Z" fill="#a63a18"/>
<circle cx="18.2" cy="25.7" r="3.1" stroke="#8e2c10" stroke-width="2" fill="none"/><circle cx="31.2" cy="19.2" r="3.1" stroke="#8e2c10" stroke-width="2" fill="none"/><circle cx="31.2" cy="32.4" r="3.1" stroke="#8e2c10" stroke-width="2" fill="none"/><path d="M21 24.3L28.4 20.6M21 27.1L28.4 31" stroke="#8e2c10" stroke-width="1.9"/></svg>
<div class="t c" style="left:283.05px;width:200px;top:193.7px;font-size:9px;color:#4a4a4a;font-weight:normal;">Public</div>
<svg class="abs" style="left:147.5px;top:223.7px" width="53" height="45" viewBox="0 0 53 45">
<path d="M0 3Q0 0 3 0H19.5Q21 0 22 1L25 4.1H50Q52.5 4.1 52.5 6.6V20H0Z" fill="#b3391a"/>
<path d="M0 12.5Q0 9.8 2.7 9.8H49.8Q52.5 9.8 52.5 12.5V41.5Q52.5 44.5 49.5 44.5H3Q0 44.5 0 41.5Z" fill="#e0612f"/>
<path d="M0 41V41.5Q0 44.5 3 44.5H49.5Q52.5 44.5 52.5 41.5V41Q52.5 43 49.5 43H3Q0 43 0 41Z" fill="#a63a18"/>
</svg>
<div class="t c" style="left:73.75px;width:200px;top:279.7px;font-size:9px;color:#4a4a4a;font-weight:normal;">snap</div>
<svg class="abs" style="left:252.3px;top:223.7px" width="53" height="45" viewBox="0 0 53 45">
<path d="M0 3Q0 0 3 0H19.5Q21 0 22 1L25 4.1H50Q52.5 4.1 52.5 6.6V20H0Z" fill="#b3391a"/>
<path d="M0 12.5Q0 9.8 2.7 9.8H49.8Q52.5 9.8 52.5 12.5V41.5Q52.5 44.5 49.5 44.5H3Q0 44.5 0 41.5Z" fill="#e0612f"/>
<path d="M0 41V41.5Q0 44.5 3 44.5H49.5Q52.5 44.5 52.5 41.5V41Q52.5 43 49.5 43H3Q0 43 0 41Z" fill="#a63a18"/>
<rect x="19" y="16.9" width="5.9" height="18.5" stroke="#8e2c10" stroke-width="1.9" fill="none"/><path d="M21.5 19.8H24M21.5 22.6H24M21.5 25.4H24M21.5 28.2H24M21.5 31H24" stroke="#8e2c10" stroke-width="1.1"/><path d="M27.7 16.6H32.6V31.5L30.15 36.3L27.7 31.5Z" fill="#8e2c10"/><path d="M29.2 31.5L30.15 33.5L31.1 31.5Z" fill="#e0612f"/></svg>
<div class="t c" style="left:178.55px;width:200px;top:279.7px;font-size:9px;color:#4a4a4a;font-weight:normal;">Templates</div>
<svg class="abs" style="left:356.8px;top:223.7px" width="53" height="45" viewBox="0 0 53 45">
<path d="M0 3Q0 0 3 0H19.5Q21 0 22 1L25 4.1H50Q52.5 4.1 52.5 6.6V20H0Z" fill="#b3391a"/>
<path d="M0 12.5Q0 9.8 2.7 9.8H49.8Q52.5 9.8 52.5 12.5V41.5Q52.5 44.5 49.5 44.5H3Q0 44.5 0 41.5Z" fill="#e0612f"/>
<path d="M0 41V41.5Q0 44.5 3 44.5H49.5Q52.5 44.5 52.5 41.5V41Q52.5 43 49.5 43H3Q0 43 0 41Z" fill="#a63a18"/>
<rect x="15.9" y="18.5" width="20" height="15.1" stroke="#8e2c10" stroke-width="1.9" fill="none"/><path d="M19.4 18.5V33.6M32.6 18.5V33.6M19.4 26.1H32.6" stroke="#8e2c10" stroke-width="1.9"/><path d="M17.6 20.3V31.8M34.2 20.3V31.8" stroke="#8e2c10" stroke-width="1.3" stroke-dasharray="1.2 1.1"/></svg>
<div class="t c" style="left:283.05px;width:200px;top:279.7px;font-size:9px;color:#4a4a4a;font-weight:normal;">Videos</div>
</div>
<div class="abs" style="left:946px;top:25px;width:251px;height:147px;background:#fff;border-radius:10px;box-shadow:0 1px 5px rgba(0,0,0,.3)">
<div class="abs" style="left:12.100000000000001px;top:11.9px;width:23px;height:23px;border-radius:12px;background:#e8e8e8"></div>
<svg class="abs" style="left:17.6px;top:17.4px" width="12" height="12" viewBox="0 0 12 12"><circle cx="2.2" cy="2.4" r="0.9" fill="#555"/><circle cx="10.1" cy="2.4" r="0.9" fill="#555"/><circle cx="2.2" cy="7.9" r="0.9" fill="#555"/><rect x="5.3" y="5.5" width="6" height="5" rx="0.8" fill="#555"/><path d="M6.8 6.6V9.4M9.8 6.6V9.4" stroke="#e8e8e8" stroke-width="0.7"/></svg>
<div class="abs" style="left:43.5px;top:11.9px;width:23px;height:23px;border-radius:12px;background:#e8e8e8"></div>
<svg class="abs" style="left:49px;top:17.4px" width="12" height="12" viewBox="0 0 12 12"><circle cx="6" cy="6" r="3.2" stroke="#3a3a3a" stroke-width="2.4" fill="none"/><circle cx="10.40" cy="6.00" r="1.15" fill="#3a3a3a"/><circle cx="9.11" cy="9.11" r="1.15" fill="#3a3a3a"/><circle cx="6.00" cy="10.40" r="1.15" fill="#3a3a3a"/><circle cx="2.89" cy="9.11" r="1.15" fill="#3a3a3a"/><circle cx="1.60" cy="6.00" r="1.15" fill="#3a3a3a"/><circle cx="2.89" cy="2.89" r="1.15" fill="#3a3a3a"/><circle cx="6.00" cy="1.60" r="1.15" fill="#3a3a3a"/><circle cx="9.11" cy="2.89" r="1.15" fill="#3a3a3a"/></svg>
<div class="abs" style="left:185.4px;top:11.9px;width:23px;height:23px;border-radius:12px;background:#e8e8e8"></div>
<svg class="abs" style="left:190.9px;top:17.4px" width="12" height="12" viewBox="0 0 12 12"><rect x="2" y="5.2" width="8" height="6" rx="1" stroke="#3a3a3a" stroke-width="1.1" fill="none"/><path d="M3.8 5.2V3.8A2.2 2.2 0 0 1 8.2 3.8V5.2" stroke="#3a3a3a" stroke-width="1.1" fill="none"/><rect x="5.3" y="7.5" width="1.4" height="1.4" fill="#3a3a3a"/></svg>
<div class="abs" style="left:216.2px;top:11.9px;width:23px;height:23px;border-radius:12px;background:#e8e8e8"></div>
<svg class="abs" style="left:221.7px;top:17.4px" width="12" height="12" viewBox="0 0 12 12"><path d="M3.3 3.6A3.8 3.8 0 1 0 8.7 3.6" stroke="#555" stroke-width="1.2" fill="none" stroke-linecap="round"/><path d="M6 1.5V6" stroke="#555" stroke-width="1.2" stroke-linecap="round"/></svg>
<svg class="abs" style="left:15px;top:46.5px" width="11" height="10" viewBox="0 0 11 10"><path d="M0.5 3.2H2.5L5.5 0.8V9.2L2.5 6.8H0.5Z" fill="#222"/><path d="M7 3Q8.2 5 7 7" stroke="#999" stroke-width="1.1" fill="none"/></svg>
<div class="abs" style="left:37px;top:50.4px;width:170px;height:2.5px;border-radius:2px;background:#b5441a"></div>
<div class="abs" style="left:207px;top:50.6px;width:28px;height:2px;border-radius:2px;background:#e4e4e4"></div>
<div class="abs" style="left:202px;top:46.6px;width:10px;height:10px;border-radius:5px;background:#1e1e1e"></div>
<div class="abs" style="left:12px;top:68.3px;width:109.3px;height:29.4px;border-radius:12px;background:#d3461a;overflow:hidden"><div class="abs" style="left:86.7px;top:0;width:23px;height:30px;background:#cb431a;border-left:1px solid #d85a30"></div></div>
<svg class="abs" style="left:20.5px;top:77.5px" width="11" height="11" viewBox="0 0 11 11"><rect x="3.8" y="1" width="3.4" height="3" fill="#fff"/><rect x="0.8" y="7" width="3.4" height="3" fill="#fff"/><rect x="6.8" y="7" width="3.4" height="3" fill="#fff"/><path d="M5.5 4V5.6M2.5 7V5.6H8.5V7" stroke="#fff" stroke-width="1" fill="none"/></svg>
<div class="t" style="left:37px;top:77.5px;font-size:9px;color:#ffffff;font-weight:normal;-webkit-text-stroke:0.5px currentColor">Wired</div>
<svg class="abs" style="left:109px;top:79px" width="5" height="8" viewBox="0 0 5 8"><path d="M1 1L3.8 4L1 7" stroke="#f0c0a8" stroke-width="1" fill="none"/></svg>
<div class="abs" style="left:130px;top:68.3px;width:108.7px;height:29.4px;border-radius:12px;background:#e8e8e8"></div>
<svg class="abs" style="left:138.2px;top:77.5px" width="11" height="11" viewBox="0 0 11 11"><path d="M3 2.2A4.3 4.3 0 1 0 8 2.2" stroke="#333" stroke-width="1.3" fill="none"/><path d="M5.5 1.5V5.5" stroke="#333" stroke-width="1.3"/><circle cx="5.5" cy="5.8" r="0.9" fill="#333"/></svg>
<div class="t" style="left:155px;top:72.8px;font-size:9px;color:#2e2e2e;font-weight:normal;-webkit-text-stroke:0.5px currentColor">Power Mode</div>
<div class="t" style="left:155px;top:83.5px;font-size:7.5px;color:#555555;font-weight:normal;">Balanced</div>
<div class="abs" style="left:12px;top:106.3px;width:109.3px;height:28.7px;border-radius:12px;background:#e8e8e8"></div>
<svg class="abs" style="left:21px;top:115.2px" width="11" height="11" viewBox="0 0 11 11"><circle cx="5.5" cy="5.5" r="4.3" stroke="#2a2a2a" stroke-width="1.3" fill="none"/><path d="M5.5 1.2A4.3 4.3 0 0 0 5.5 9.8Z" fill="#2a2a2a"/></svg>
<div class="t" style="left:37.3px;top:115.2px;font-size:9px;color:#2e2e2e;font-weight:normal;-webkit-text-stroke:0.5px currentColor">Dark Style</div>
<div class="abs" style="left:130px;top:106.3px;width:108.7px;height:28.7px;border-radius:12px;background:#e8e8e8"></div>
<svg class="abs" style="left:138.5px;top:115.2px" width="11" height="11" viewBox="0 0 11 11"><path d="M2.5 8.5V5.5A3 3 0 0 1 8.5 5.5V8.5H2M4.5 10H6.5" stroke="#444" stroke-width="1.1" fill="none"/><path d="M1.5 9.5L9.5 1.5" stroke="#444" stroke-width="1.1"/></svg>
<div class="t" style="left:155px;top:115.2px;font-size:9px;color:#2e2e2e;font-weight:normal;-webkit-text-stroke:0.5px currentColor">Do Not Disturb</div>
</div>
</div></body></html>
